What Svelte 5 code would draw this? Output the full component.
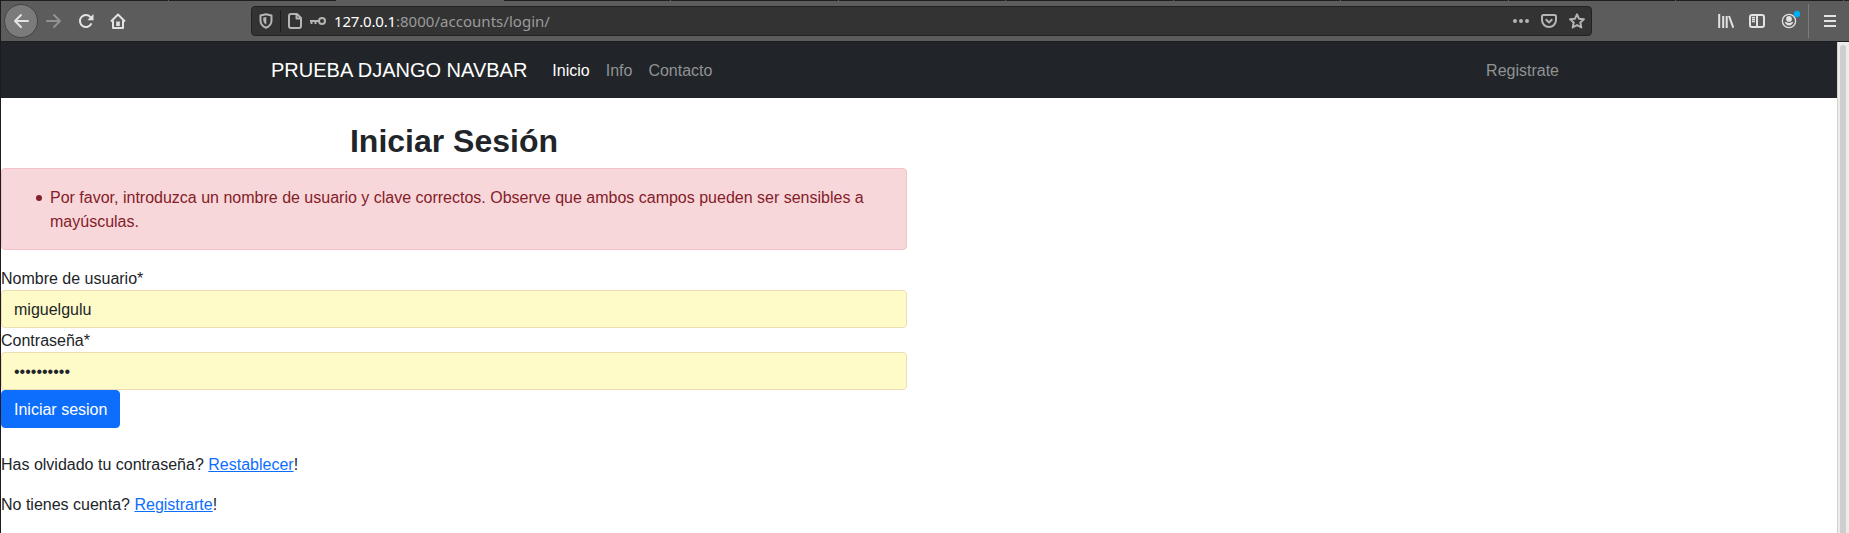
<script lang="ts">
  let username = $state('miguelgulu');
  let password = $state('contrasena');
  const links = ['Inicio', 'Info', 'Contacto'];
  const tabs = Array.from({ length: 11 }, (_, i) => i);
</script>

<div class="window">
  <div class="tabs">{#each tabs as tab}<i class:active={tab === 2} class:before={tab === 1}></i>{/each}</div>
  <header class="toolbar">
    <button class="back" aria-label="Atrás">
      <svg width="16" height="16" viewBox="0 0 16 16"><path d="M8 2 2 8l6 6M2.4 8H15" /></svg>
    </button>
    <svg class="forward" width="16" height="16" viewBox="0 0 16 16"><path d="m8 2 6 6-6 6M13.6 8H1" /></svg>
    <svg class="reload" width="16" height="16" viewBox="0 0 16 16"><path d="M13.5 10.3A6 6 0 1 1 12.7 4.3" /><path class="solid" d="M15.5 1v6.2H9.3z" /></svg>
    <svg class="home" width="16" height="16" viewBox="0 0 16 16"><path d="m1 8.5 7-7 7 7M3 7.5V15h10V7.5" /><path class="solid" d="M6.2 8.5h3.6V13H6.2z" /></svg>
    <div class="address">
      <svg class="shield" width="14" height="16" viewBox="0 0 14 16"><path d="M7 1.2 12.5 2.5v5c0 3.7-2.5 6-5.5 7.200C4 13.500 1.500 11.200 1.500 7.500v-5z" /><path class="solid" d="M7.300 4v7.700C5.300 10.500 4.300 9.300 4.300 7.300V4.600z" /></svg>
      <span class="bar"></span>
      <svg class="page" width="14" height="16" viewBox="0 0 14 16"><path d="M3 1h6l4 4v8a2 2 0 0 1-2 2H3a2 2 0 0 1-2-2V3a2 2 0 0 1 2-2zM8.500 1v4.500H13" /></svg>
      <svg class="key" width="16" height="10" viewBox="0 0 16 10"><circle cx="12" cy="5" r="3" /><path d="M9 5H0M1.500 5v3M5.500 5v3" /></svg>
      <span class="url"><b>127.0.0.1</b>:8000/accounts/login/</span>
      <svg class="dots" width="16" height="16" viewBox="0 0 16 16"><circle cx="2" cy="8" r="2" /><circle cx="8" cy="8" r="2" /><circle cx="14" cy="8" r="2" /></svg>
      <svg class="pocket" width="16" height="16" viewBox="0 0 16 16"><path d="M2.500 2h11A1.500 1.500 0 0 1 15 3.500V7A7 7 0 0 1 1 7V3.500A1.500 1.500 0 0 1 2.500 2z" /><path d="m4.700 6.300 3.300 3.200 3.300-3.200" /></svg>
      <svg class="star" width="16" height="16" viewBox="0 0 16 16"><path d="m8 1.300 2 4.400 4.900.5-3.600 3.300 1 4.900L8 12l-4.300 2.400 1-4.900L1.100 6.200 6 5.700z" /></svg>
    </div>
    <svg class="library" width="16" height="16" viewBox="0 0 16 16"><path d="M1.200 1v14M5.200 3v12M8.700 3v12M11 3l4.300 11.700" /></svg>
    <svg class="sidebar" width="16" height="16" viewBox="0 0 16 16"><rect x="1" y="2" width="14" height="12" rx="2" /><path d="M8 2v12" /><path class="thin" d="M3 4.500h3M3 6.500h3M3 8.500h3" /></svg>
    <svg class="account" width="20" height="20" viewBox="0 0 20 20"><circle class="thin" cx="8" cy="12" r="6.600" /><circle class="solid" cx="8" cy="9.900" r="2.900" /><path class="solid" d="M3.800 13.300c.6-.3 1.200-.3 1.700 0 1.500 1 3.500 1 5 0 .5-.3 1.100-.3 1.700 0-.7 2-2.200 3.200-4.200 3.200s-3.500-1.200-4.200-3.200z" /><circle class="notice" cx="16" cy="5" r="3.200" /></svg>
    <span class="divider"></span>
    <svg class="menu" width="12" height="16" viewBox="0 0 12 16"><path d="M0 3h12M0 8h12M0 13h12" /></svg>
  </header>

  <div class="viewport">
    <div class="document">
      <nav>
        <div class="container">
          <a class="brand" href="#top">PRUEBA DJANGO NAVBAR</a>
          {#each links as link, i}
            <a class="link" class:current={i === 0} href="#top">{link}</a>
          {/each}
          <a class="link last" href="#top">Registrate</a>
        </div>
      </nav>
      <main>
        <h2>Iniciar Sesión</h2>
        <div class="alert">
          <ul>
            <li>Por favor, introduzca un nombre de usuario y clave correctos. Observe que ambos campos pueden ser sensibles a mayúsculas.</li>
          </ul>
        </div>
        <label for="user">Nombre de usuario*</label>
        <input id="user" bind:value={username} />
        <label for="pass">Contraseña*</label>
        <input id="pass" type="password" bind:value={password} />
        <button class="submit">Iniciar sesion</button>
        <p>Has olvidado tu contraseña? <a href="#top">Restablecer</a>!</p>
        <p>No tienes cuenta? <a href="#top">Registrarte</a>!</p>
      </main>
    </div>
    <div class="scroll"><span></span></div>
  </div>
</div>

<style>
  :global(body) { margin: 0; overflow: hidden; }
  .window, .window * { box-sizing: border-box; }
  .window { height: 533px; border-left: 1px solid #1c1b1d; display: flex; flex-direction: column; background: #fff; font: 16px/24px "Liberation Sans", Arial, sans-serif; color: #212529; }
  .tabs { height: 1px; background: #1f1e20; flex: none; display: flex; overflow: hidden; }
  .tabs i { flex: 0 0 167.500px; border-right: 1px solid #5c5c5c; }
  .tabs .before { border-right: 0; }
  .tabs .active { background: #5c5c5c; border: 0; }
  .toolbar { height: 40px; flex: none; background: #5c5c5c; display: flex; align-items: center; padding-left: 3px; }
  svg { flex: none; display: block; fill: none; stroke: #e3e3e3; stroke-width: 2; stroke-linejoin: round; }
  svg .solid { fill: #e3e3e3; stroke: none; }
  svg .thin { stroke-width: 1.3; }
  svg .notice { fill: #00adf5; stroke: none; }
  .back { width: 34px; height: 34px; border-radius: 50%; border: 1px solid #444; background: #7b7b7b; padding: 0; display: grid; place-items: center; }
  .back svg, .forward { stroke-linecap: round; }
  .forward { margin-left: 8px; stroke: #929292; }
  .reload, .home { margin-left: 16px; }
  .address { margin-left: 125px; width: 1341px; height: 30px; background: #333; border: 1px solid #222; border-radius: 4px; display: flex; align-items: center; padding-left: 7px; }
  .address svg { stroke: #b5b5b5; }
  .address .solid { fill: #b5b5b5; }
  .bar { width: 1px; height: 22px; background: #1d1d1d; margin-left: 7px; }
  .page { margin-left: 7px; }
  .key { margin-left: 8px; }
  .url { margin-left: 8px; font: 15px/20px "Noto Sans", sans-serif; color: #9b9b9b; letter-spacing: 0.03px; }
  .url b { font-weight: 400; color: #fff; letter-spacing: -0.18px; }
  .address .dots { margin-left: auto; fill: #b5b5b5; stroke: none; }
  .pocket { margin-left: 12px; }
  .star { margin: 0 6px 0 12px; }
  .library { margin-left: 126px; }
  .sidebar { margin-left: 15px; }
  .account { margin: -4px 0 0 16px; }
  .divider { width: 1px; height: 34px; background: #7c7c7c; margin-left: 7px; }
  .menu { margin-left: 15px; }
  .viewport { flex: 1; display: flex; min-height: 0; border-top: 1px solid #1d1e20; }
  .document { flex: 1; min-width: 0; }
  .scroll { width: 12px; background: #eeeceb; border-left: 1px solid #d5d1cd; padding: 3px 2px 0; }
  .scroll span { display: block; height: 100%; width: 6px; border-radius: 3px 3px 0 0; background: #cecece; }
  nav { height: 56px; background: #212529; }
  .container { width: 1320px; height: 100%; margin: 0 auto; padding: 0 12px; display: flex; align-items: center; }
  nav a { text-decoration: none; }
  .brand { font-size: 20px; line-height: 30px; color: #fff; margin-right: 17px; }
  .link { padding: 10px 8px 8px; color: #909294; }
  .current { color: #fff; }
  .last { margin-left: auto; }
  main { width: 906px; padding-top: 24px; }
  h2 { margin: 0 0 8px; font-size: 32px; line-height: 38.400px; text-align: center; }
  .alert { padding: 17px 16px 15px; margin-bottom: 16px; color: #842029; background: #f8d7da; border: 1px solid #f5c2c7; border-radius: 4px; }
  ul { margin: 0; padding: 0; list-style: none; }
  li { display: flex; gap: 7px; padding-left: 18px; }
  li::before { content: ""; flex: none; width: 6px; height: 6px; margin: 9px 1px 0 0; border-radius: 50%; background: #842029; }
  label, input { display: block; }
  label { height: 24px; padding-top: 1px; }
  input { width: 100%; height: 38px; padding: 8px 12px 6px; border: 1px solid #eedcb5; border-radius: 4px; background: #fffbc8; font: inherit; line-height: 22px; color: #212529; outline: 0; }
  .submit { display: block; height: 38px; padding: 8px 12px 6px; border: 1px solid #0d6efd; border-radius: 4px; background: #0d6efd; color: #fff; font: inherit; line-height: 22px; margin-bottom: 25px; }
  p { margin: 0 0 16px; }
  p a { color: #0d6efd; }
</style>
